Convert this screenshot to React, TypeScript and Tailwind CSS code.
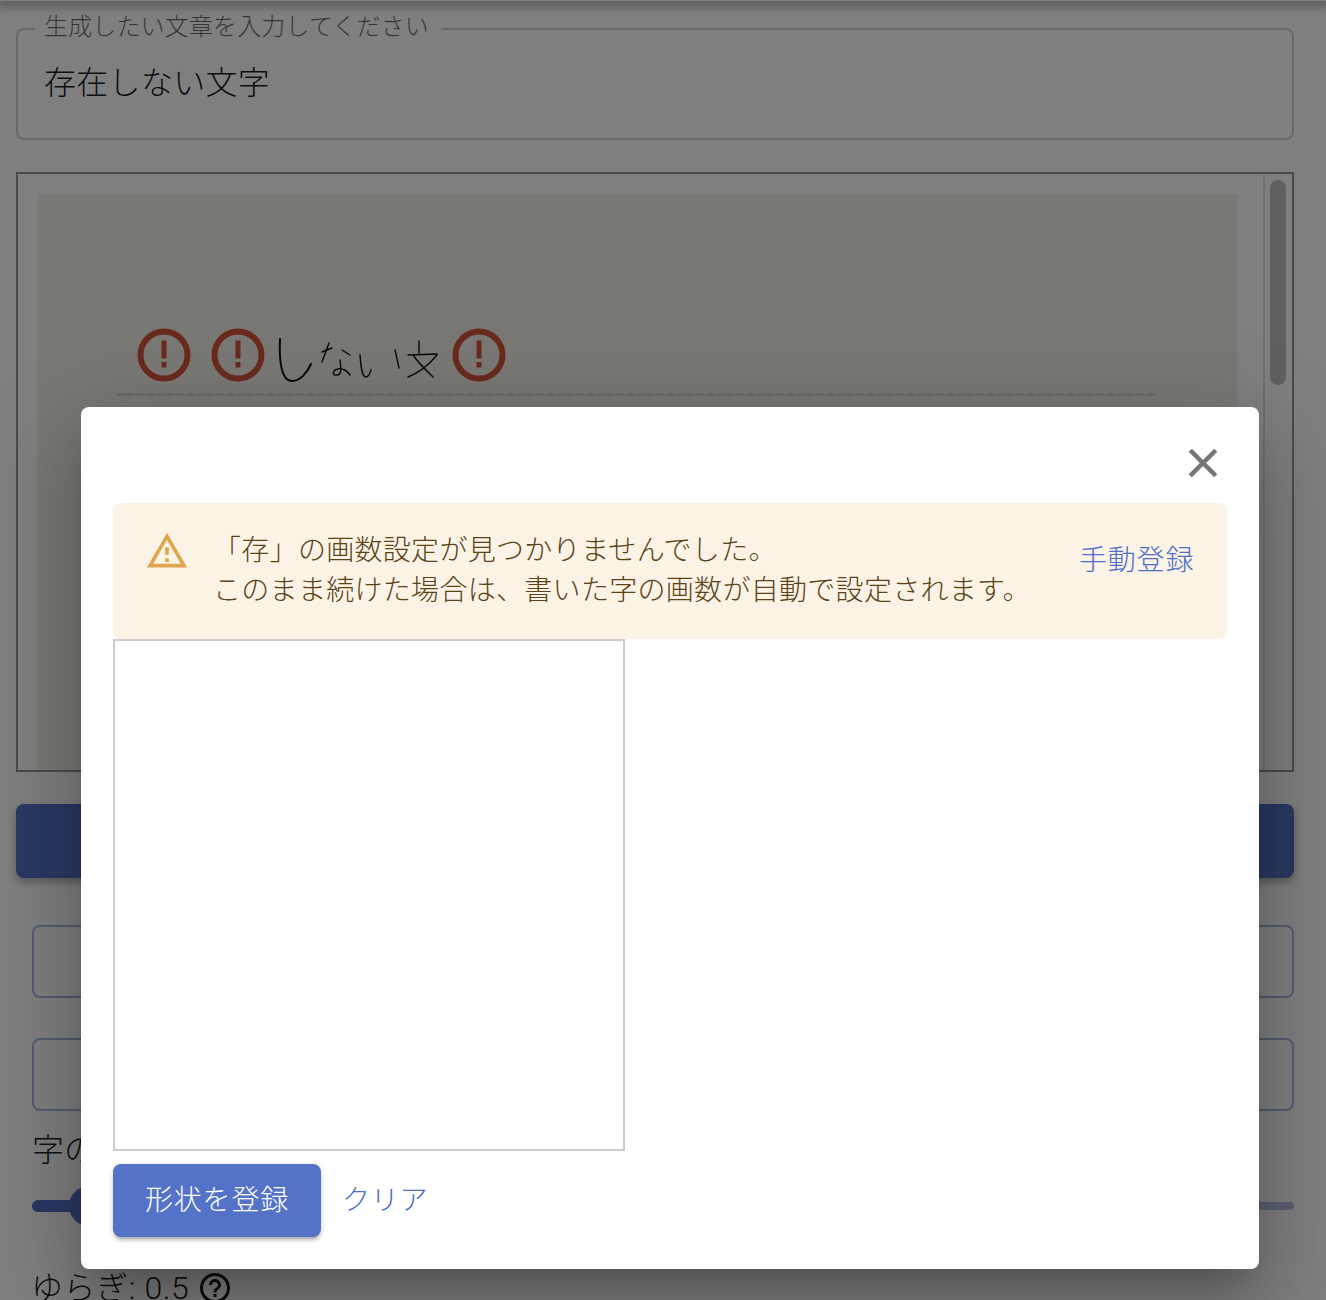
import React from "react";

const font = "font-['Roboto','Noto_Sans_CJK_JP',sans-serif]";

function ErrorIcon() {
  return (
    <svg width="54" height="54" viewBox="0 0 54 54" className="shrink-0">
      <circle cx="27" cy="27" r="23.5" fill="none" stroke="#d5553c" strokeWidth="6" />
      <rect x="24.5" y="12.5" width="5" height="18" fill="#d5553c" />
      <rect x="24.5" y="34" width="5" height="5.5" fill="#d5553c" />
    </svg>
  );
}

function Handwriting() {
  return (
    <svg width="174" height="54" viewBox="272 328 174 54" className="ml-[7px] mr-[6px] shrink-0" fill="none" stroke="#111" strokeWidth="1.4" strokeLinecap="round">
      <path strokeWidth="2" d="M280 339C279 360 281 381 292 381C300 381 307 373 311 364" />
      <path d="M322 352L332 348M329 343L322 362M342 350L350 355" />
      <path d="M340 360C341 368 342 375 337 375C332 376 332 370 338 369C343 368 347 371 350 375" />
      <path d="M360 355C361 368 362 377 366 377C369 377 370 373 371 370" />
      <path d="M395 350C397 358 398 364 399 368" />
      <path d="M419 341L419 353M408 355L437 354M437 355C428 366 418 373 408 377M413 355C420 365 428 372 433 377" />
    </svg>
  );
}

export default function App() {
  return (
    <div className={`relative h-[1300px] overflow-hidden bg-white font-light ${font}`}>
      <div className="h-px shadow-[0_2px_10px_3px_rgba(0,0,0,0.4)]" />
      <main className="pl-4 pr-8">
        <fieldset className="mt-[16px] h-[123px] rounded-lg border-2 border-[#cfcfcf]">
          <legend className="ml-[17px] pl-[9px] pr-[12px] text-[24px] leading-[24px] tracking-[0.15px] text-black/60">
            <span className="block -translate-y-[2px]">生成したい文章を入力してください</span>
          </legend>
          <div className="pl-[26px] pt-[19px] text-[32px] leading-[46px] tracking-[0.3px] text-black/90">存在しない文字</div>
        </fieldset>

        <section className="mt-8 flex h-[600px] overflow-hidden border-2 border-[#969696]">
          <div className="w-[1245px] shrink-0 pl-5 pt-5">
            <div className="h-[600px] w-[1200px] bg-[#f4f1e8] pl-[99px] pt-[134px]">
              <div className="flex items-center">
                <ErrorIcon />
                <div className="ml-5 flex items-center">
                  <ErrorIcon />
                </div>
                <Handwriting />
                <ErrorIcon />
              </div>
              <div className="-ml-5 mt-[11px] h-[3px] w-[1040px] bg-[repeating-linear-gradient(90deg,#d8d6cd_0_7px,#e8e5db_7px_10px)]" />
            </div>
          </div>
          <div className="w-[30px] border-l-2 border-[#e2e2e2] pl-[5px] pt-[6px]">
            <div className="h-[205px] w-4 rounded-full bg-[#c0c0c0]" />
          </div>
        </section>

        <div className="mt-8 h-[74px] rounded-lg bg-[#5472c8] shadow-[0_4px_8px_rgba(0,0,0,0.3)]" />
        <div className="ml-4 mt-[47px] h-[73px] rounded-lg border-2 border-[#a9b8e3]" />
        <div className="ml-4 mt-10 h-[73px] rounded-lg border-2 border-[#a9b8e3]" />
        <div className="ml-4 mt-[16px] text-[32px] leading-[46px] text-black/90">字の大きさ</div>
        <div className="relative ml-4 mt-[27px] h-3">
          <div className="absolute left-0 right-0 top-[2px] h-2 rounded-full bg-[#b5c1e6]" />
          <div className="absolute left-0 top-0 h-3 w-12 rounded-full bg-[#5472c8]" />
          <div className="absolute left-[37px] top-[-14px] h-10 w-10 rounded-full bg-[#5472c8]" />
        </div>
        <div className="ml-[15px] mt-[53px] flex items-center gap-[10px] text-[32px] leading-[46px] tracking-[0.6px] text-black/90">
          <span>ゆらぎ: 0.5</span>
          <svg width="36" height="36" viewBox="0 0 24 24" fill="currentColor" className="-ml-[2px] shrink-0">
            <path d="M11 18h2v-2h-2v2zm1-16C6.48 2 2 6.48 2 12s4.48 10 10 10 10-4.48 10-10S17.52 2 12 2zm0 18c-4.41 0-8-3.59-8-8s3.59-8 8-8 8 3.59 8 8-3.59 8-8 8zm0-14c-2.21 0-4 1.79-4 4h2c0-1.1.9-2 2-2s2 .9 2 2c0 2-3 1.75-3 5h2c0-2.25 3-2.5 3-5 0-2.21-1.79-4-4-4z" />
          </svg>
        </div>
      </main>

      <div className="absolute inset-0 flex justify-center bg-black/50 pl-[14px]">
        <div className="mt-[407px] h-[862px] w-[1178px] rounded-lg bg-white px-8 shadow-[0_22px_30px_-14px_rgba(0,0,0,0.2),0_48px_76px_6px_rgba(0,0,0,0.14),0_18px_92px_16px_rgba(0,0,0,0.12)]">
          <div className="flex h-24 items-start justify-end pt-8">
            <svg width="48" height="48" viewBox="0 0 24 24" fill="#757575" stroke="#757575" strokeWidth="0.3">
              <path d="M19 6.41 17.59 5 12 10.59 6.41 5 5 6.41 10.59 12 5 17.59 6.41 19 12 13.41 17.59 19 19 17.59 13.41 12z" />
            </svg>
          </div>

          <div className="flex h-[136px] rounded-lg bg-[#fbf4e6] pl-8 pt-[26px] text-[28px] leading-[40px] tracking-[0.3px] text-[#5c4216]">
            <svg width="44" height="44" viewBox="0 0 24 24" fill="#dfa64e" className="shrink-0">
              <path d="M12 5.99L19.53 19H4.47L12 5.99M12 2L1 21h22L12 2zm1 14h-2v2h2v-2zm0-6h-2v4h2v-4z" />
            </svg>
            <div className="ml-6 mt-[2px] w-[866px]">
              <div>「存」の画数設定が見つかりませんでした。</div>
              <div>このまま続けた場合は、書いた字の画数が自動で設定されます。</div>
            </div>
            <button className="h-fit pt-[12px] text-[28px] leading-[40px] tracking-[0.8px] text-[#4f6ec6]">手動登録</button>
          </div>

          <div className="h-[512px] w-[512px] border-2 border-[#cccccc]" />

          <div className="mt-[13px] flex items-center gap-[21px]">
            <button className="h-[73px] w-[208px] rounded-lg bg-[#5472c8] text-[28px] tracking-[0.8px] text-white shadow-[0_4px_4px_-2px_rgba(0,0,0,0.3),0_2px_6px_rgba(0,0,0,0.15)]">形状を登録</button>
            <button className="text-[28px] tracking-[0.8px] text-[#4f6ec6]">クリア</button>
          </div>
        </div>
      </div>
    </div>
  );
}
